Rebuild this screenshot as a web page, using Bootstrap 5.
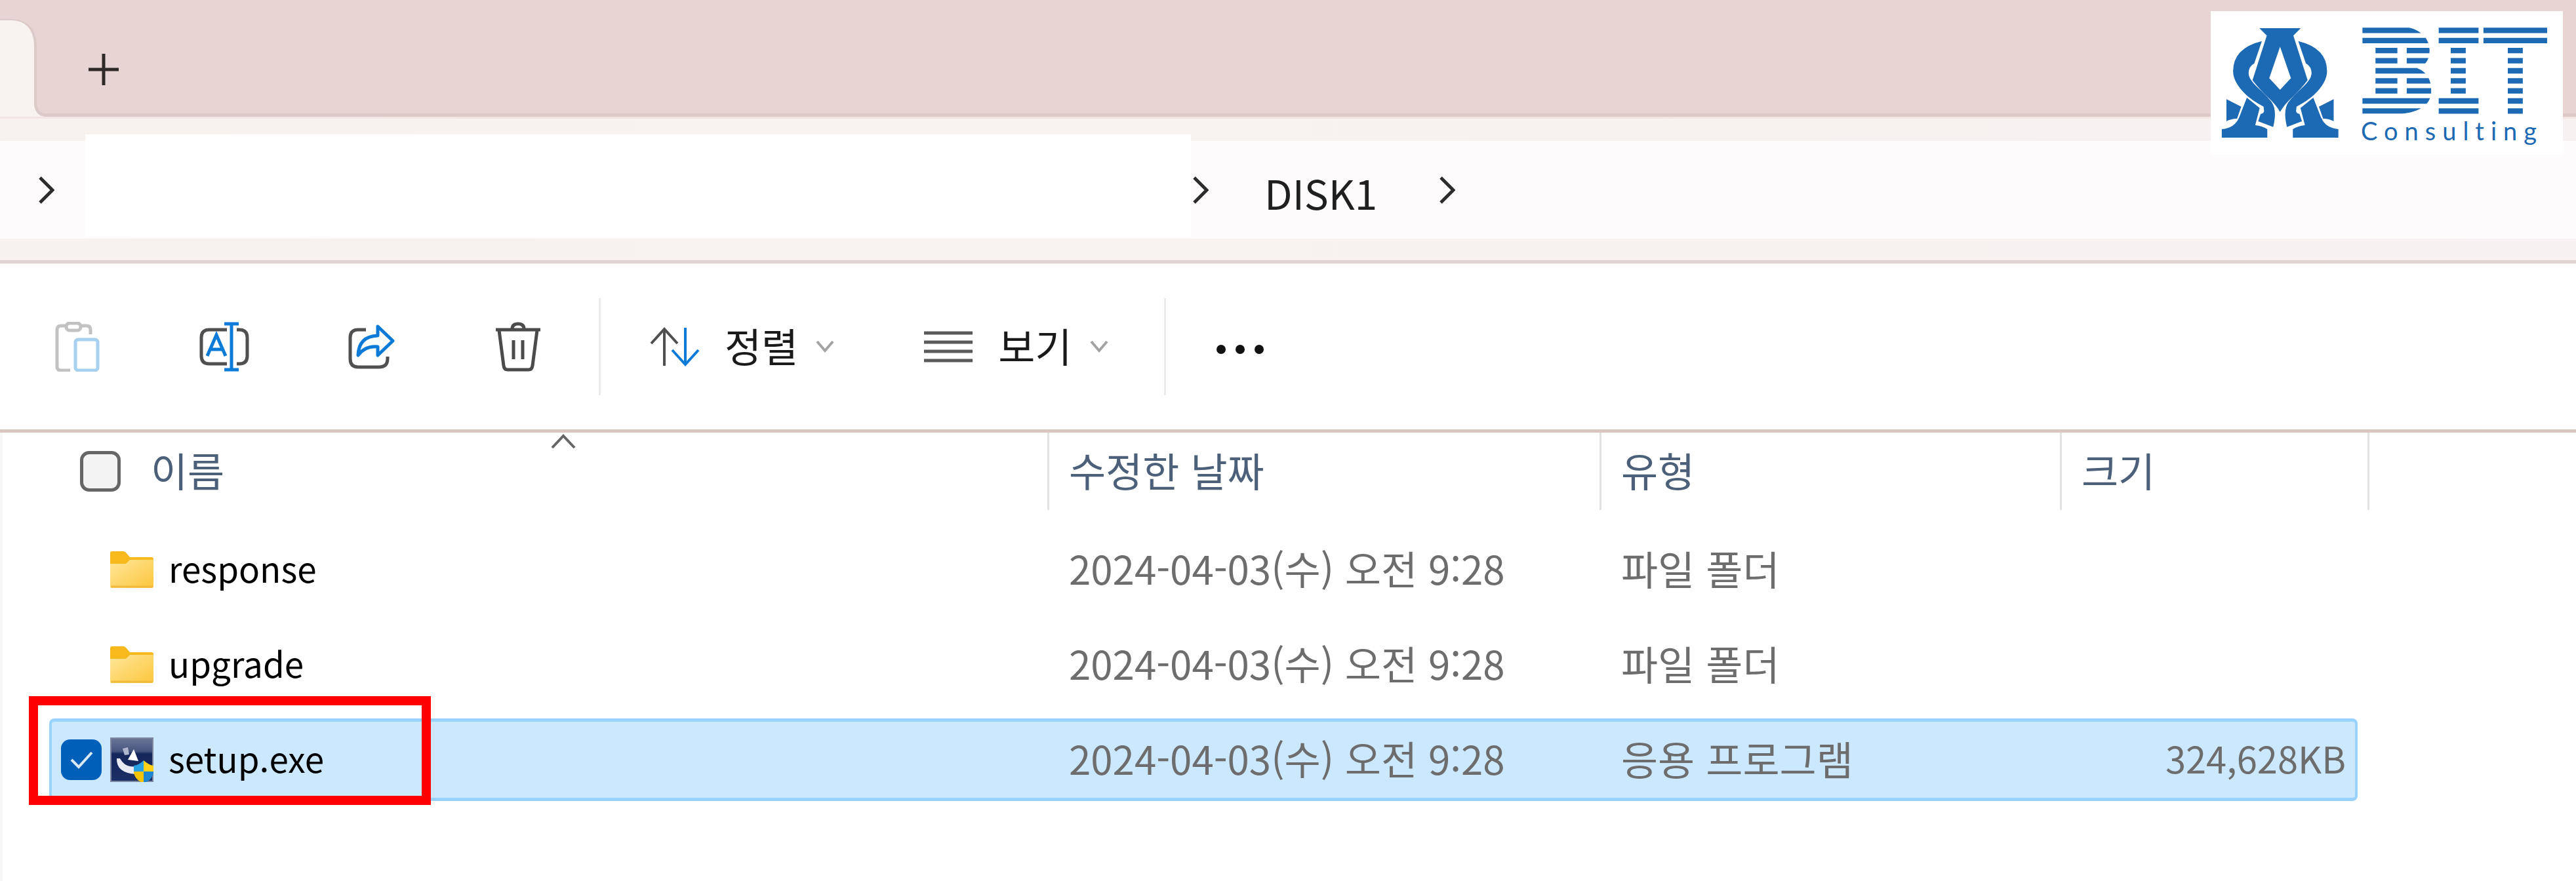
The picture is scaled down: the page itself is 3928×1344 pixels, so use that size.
<!DOCTYPE html>
<html lang="ko">
<head>
<meta charset="utf-8">
<meta name="viewport" content="width=device-width, initial-scale=1">
<title>DISK1</title>
<link href="https://cdn.jsdelivr.net/npm/bootstrap@5.3.0/dist/css/bootstrap.min.css" rel="stylesheet">
<style>
body{font-family:"Noto Sans CJK KR",sans-serif;background:#fff;color:#1a1a1a;font-size:61px;line-height:1;overflow-x:hidden}
svg{display:block;flex:none}
.tabstrip{height:181px;background:#e8d5d3;box-shadow:inset 0 -3px #f3e3e1,inset 0 -8px #dccac8}
.tabstrip .btn{margin:0 0 51px 63px}
.addressband{background:linear-gradient(90deg,#f8f2ef,#f7f1f1);padding:34px 0 33px;border-bottom:5px solid #e2d3d3}
.addressbar{height:149px;background:#fdfbfc;padding-left:59px}
.pathmask{flex:0 0 1686px;background:#fff;margin:-10px 3px 2px 47px}
.crumb{font-size:62px;color:#1f1f1f;margin:0 95px 0 85px;padding-top:6px}
.toolbar-row{height:258px;padding-left:80px;border-bottom:5px solid #d9c6c1}
.tools{gap:148px}
.rule{width:3px;height:148px;margin:0 75px 0 85px;background:#ebebeb}
.btn{--bs-btn-padding-x:0;--bs-btn-padding-y:0;--bs-btn-border-width:0px;--bs-btn-font-size:61px;--bs-btn-line-height:1;--bs-btn-color:#1a1a1a;--bs-btn-disabled-opacity:1}
.menu-btn{gap:27px}
.menu-btn + .menu-btn{margin-left:136px}
.menu-btn .label-txt{padding:0 0 4px 11px}
.listing{border-left:4px solid #f7f7f7;padding-left:71px;min-height:684px}
.files{table-layout:fixed;width:3538px;--bs-table-bg:transparent}
.files th,.files td{padding:0;font-weight:400;vertical-align:top}
.files th{height:136px;color:#4c607a}
.head-cell{height:118px;border-right:3px solid #e2e2e2;padding:0 0 6px 30px}
.name-head{padding-left:47px;gap:46px}
.name-head .form-check-input{margin-top:6px}
.files td{height:145px;padding:10px 0 9px;color:#6d6d6d}
.file-cell{height:126px;padding:0 0 6px 30px;border:0 solid #99d1ff}
.date-cell{font-size:60px}
.name-cell{font-size:53px;padding-left:18px;gap:13px;color:#000}
.name-cell .fname{margin-left:10px}
.name-cell svg,.name-cell .form-check-input{margin-top:6px}
.picked .file-cell{background:#cce8ff;border-width:5px 0}
.picked .name-cell{border-left-width:4px;border-radius:8px 0 0 8px;padding-left:14px}
.picked .size-cell{border-right-width:4px;border-radius:0 8px 8px 0}
.size-cell{font-size:56px;padding-right:14px}
.form-check-input{width:62px;height:62px;margin:0;flex:none;border:5px solid #666;border-radius:14px!important;background-color:#f3f3f3}
.name-cell .form-check-input{border:0}
.name-cell .form-check-input:checked{background-color:#005fb8;background-size:62px;background-image:url("data:image/svg+xml,%3Csvg xmlns='http://www.w3.org/2000/svg' viewBox='0 0 62 62'%3E%3Cpath d='M16 31 27 42 47 20' fill='none' stroke='%23dbe9f7' stroke-width='4'/%3E%3C/svg%3E")}
.ghost{visibility:hidden}
.sortmark{left:763px;top:1px}
.callout{left:-35px;top:-39px;width:613px;height:166px;border:14px solid red;pointer-events:none}
.brand{right:20px;top:17px;width:537px;height:219px;background:#fff}
.brand-word{left:229px;top:158px;font:400 38px/48px "Lato",sans-serif;letter-spacing:10px;color:#1c69b4}
</style>
<script src="https://cdn.jsdelivr.net/npm/bootstrap@5.3.0/dist/js/bootstrap.bundle.min.js"></script>
</head>
<body class="position-relative">
<svg width="0" height="0" class="position-absolute" aria-hidden="true">
  <defs>
    <linearGradient id="fold" x1="0" y1="0" x2="1" y2="1"><stop offset="0" stop-color="#ffe79b"/><stop offset="1" stop-color="#fcc63c"/></linearGradient>
    <linearGradient id="navy" x1="0" y1="0" x2="0" y2="1"><stop offset="0" stop-color="#6a7597"/><stop offset=".3" stop-color="#46557f"/><stop offset=".36" stop-color="#14265a"/><stop offset="1" stop-color="#1b2f66"/></linearGradient>
    <symbol id="folder" viewBox="0 0 66 56"><path d="M0 3Q0 0 3 0H20Q23 0 25 3L30 9H63Q66 9 66 12V30H0Z" fill="#f7b91c"/><path d="M0 19H24L30 13H66V53Q66 56 63 56H3Q0 56 0 53Z" fill="url(#fold)"/><path d="M1 54H65" stroke="#f0bb3c" stroke-width="3"/></symbol>
    <symbol id="next" viewBox="0 0 24 42"><path d="M2 2 21 21 2 40" fill="none" stroke="#2b2b2b" stroke-width="5"/></symbol>
    <symbol id="down" viewBox="0 0 28 20"><path d="M2 2 14 16 26 2" fill="none" stroke="#a3a3a3" stroke-width="4"/></symbol>
  </defs>
</svg>

<header class="tabstrip d-flex align-items-end">
  <svg width="71" height="153" viewBox="0 0 71 153"><path d="M0 1H19Q54 3 56 40V130Q57 144 71 146V150H0Z" fill="#dccac8"/><path d="M0 3H18Q49 4 52 38V132Q54 148 68 150H0Z" fill="#f8f3f0"/><path d="M0 151.500H71" stroke="#f3e3e1" stroke-width="3"/></svg>
  <button class="btn" type="button" aria-label="새 탭"><svg width="48" height="48" viewBox="0 0 48 48"><path d="M24 0V48M1 24H47" stroke="#2e2a2a" stroke-width="5"/></svg></button>
</header>

<nav class="addressband" aria-label="경로">
  <div class="addressbar d-flex align-items-center">
    <svg width="24" height="42"><use href="#next"/></svg>
    <div class="pathmask align-self-stretch"></div>
    <svg width="24" height="42"><use href="#next"/></svg>
    <a class="crumb text-decoration-none" href="#">DISK1</a>
    <svg width="24" height="42"><use href="#next"/></svg>
  </div>
</nav>

<div class="toolbar-row d-flex align-items-center" role="toolbar">
  <div class="tools d-flex">
    <button class="btn" type="button" disabled aria-label="붙여넣기"><svg width="76" height="76" viewBox="0 0 76 76" fill="none" stroke-width="5"><path d="M20 6H13Q7 6 7 12V68Q7 74 13 74H27M44 6H52Q58 6 58 12V19" stroke="#c2c2c2"/><rect x="21" y="2" width="22" height="11" rx="5" stroke="#c2c2c2"/><rect x="35" y="27" width="34" height="47" rx="4" stroke="#a8d1f0"/></svg></button>
    <button class="btn" type="button" aria-label="이름 바꾸기"><svg width="76" height="76" viewBox="0 0 76 76" fill="none" stroke-width="5"><path d="M42 12H15Q3 12 3 24V52Q3 64 15 64H42M57 12H61Q73 12 73 24V52Q73 64 61 64H57" stroke="#505050"/><path d="M38 3H60M38 73H60M49 2V74M12 52 26 20 40 52M17 42H35" stroke="#0c7bd8"/></svg></button>
    <button class="btn" type="button" aria-label="공유"><svg width="76" height="76" viewBox="0 0 76 76" fill="none" stroke-width="5" stroke-linejoin="round"><path d="M30 12H18Q6 12 6 24V56Q6 69 18 69H50Q63 69 63 56V53" stroke="#505050"/><path d="M48 7 71 29 48 51V38Q29 36 18 51Q19 22 48 21Z" stroke="#0c7bd8"/></svg></button>
    <button class="btn" type="button" aria-label="삭제"><svg width="76" height="76" viewBox="0 0 76 76" fill="none" stroke="#4b4b4b" stroke-width="5"><path d="M4 12H72M9 13 16 67Q17 73 22 73H54Q59 73 60 67L67 13M31 28V57M45 28V57M29 11Q29 3 38 3Q47 3 47 11"/></svg></button>
  </div>
  <div class="rule"></div>
  <button class="btn menu-btn d-flex align-items-center" type="button"><svg width="76" height="62" viewBox="0 0 76 62" fill="none" stroke-width="4"><path d="M22 60V4M2 26 22 4 42 26" stroke="#505050"/><path d="M54 2V58M34 36 54 58 74 36" stroke="#0c7bd8"/></svg><span class="label-txt">정렬</span><svg width="28" height="20"><use href="#down"/></svg></button>
  <button class="btn menu-btn d-flex align-items-center" type="button"><svg width="76" height="50" viewBox="0 0 76 50"><path d="M1 4H75M1 18H75M1 32H75M1 46H75" stroke="#5a5a5a" stroke-width="5"/></svg><span class="label-txt">보기</span><svg width="28" height="20"><use href="#down"/></svg></button>
  <div class="rule"></div>
  <button class="btn" type="button" aria-label="더 보기"><svg width="76" height="24" viewBox="0 0 76 24" fill="#111"><circle cx="9" cy="16" r="7"/><circle cx="38" cy="16" r="7"/><circle cx="67" cy="16" r="7"/></svg></button>
</div>

<main class="listing">
  <table class="files table table-borderless m-0">
    <colgroup><col style="width:1525px"><col style="width:842px"><col style="width:702px"><col style="width:451px"><col style="width:18px"></colgroup>
    <thead>
      <tr>
        <th scope="col"><div class="head-cell name-head d-flex align-items-center position-relative"><input class="form-check-input" type="checkbox" id="all"><label for="all">이름</label><svg class="sortmark position-absolute" width="42" height="24" viewBox="0 0 42 24"><path d="M4 22 21 4 38 22" fill="none" stroke="#666" stroke-width="4"/></svg></div></th>
        <th scope="col"><div class="head-cell d-flex align-items-center">수정한 날짜</div></th>
        <th scope="col"><div class="head-cell d-flex align-items-center">유형</div></th>
        <th scope="col" colspan="2"><div class="head-cell d-flex align-items-center">크기</div></th>
      </tr>
    </thead>
    <tbody>
      <tr>
        <td><div class="file-cell name-cell d-flex align-items-center"><input class="form-check-input ghost" type="checkbox" id="f1"><svg width="66" height="56"><use href="#folder"/></svg><label class="fname" for="f1">response</label></div></td>
        <td><div class="file-cell date-cell d-flex align-items-center">2024-04-03(수) 오전 9:28</div></td>
        <td><div class="file-cell d-flex align-items-center">파일 폴더</div></td>
        <td></td><td></td>
      </tr>
      <tr>
        <td><div class="file-cell name-cell d-flex align-items-center"><input class="form-check-input ghost" type="checkbox" id="f2"><svg width="66" height="56"><use href="#folder"/></svg><label class="fname" for="f2">upgrade</label></div></td>
        <td><div class="file-cell date-cell d-flex align-items-center">2024-04-03(수) 오전 9:28</div></td>
        <td><div class="file-cell d-flex align-items-center">파일 폴더</div></td>
        <td></td><td></td>
      </tr>
      <tr class="picked">
        <td><div class="file-cell name-cell d-flex align-items-center position-relative"><input class="form-check-input" type="checkbox" id="f3" checked><svg width="66" height="68" viewBox="0 0 66 68"><rect width="66" height="68" fill="#7d869f"/><rect x="2" y="2" width="62" height="64" fill="url(#navy)"/><path d="M19 17 27 15 29 26 22 27Z" fill="#aeb7cf"/><path d="M27 34 36 18 43 36Z" fill="#fff"/><path d="M10 32Q9 54 39 56L41 44Q23 47 15 32Z" fill="#e8ebf3"/><clipPath id="shield"><path d="M51 35Q59 42 66 43V54Q64 65 51 70Q38 65 36 54V43Q44 42 51 35Z"/></clipPath><g clip-path="url(#shield)"><path d="M34 34H51V52H34Z" fill="#2aa1e0"/><path d="M51 34H67V52H51Z" fill="#ffd21a"/><path d="M34 52H51V68H34Z" fill="#f5c400"/><path d="M51 52H67V68H51Z" fill="#1c86d0"/></g></svg><label class="fname" for="f3">setup.exe</label><div class="callout position-absolute"></div></div></td>
        <td><div class="file-cell date-cell d-flex align-items-center">2024-04-03(수) 오전 9:28</div></td>
        <td><div class="file-cell d-flex align-items-center">응용 프로그램</div></td>
        <td><div class="file-cell size-cell d-flex align-items-center justify-content-end">324,628KB</div></td>
        <td></td>
      </tr>
    </tbody>
  </table>
</main>

<div class="brand position-absolute">
  <svg width="537" height="219" viewBox="83 51 1432 657" preserveAspectRatio="none" fill="#1c69b4" role="img" aria-label="BIT">
    <path fill-rule="evenodd" d="M281 129H449L419 163 477 367Q450 408 412 448Q383 478 365 512Q347 478 318 448Q280 408 253 367L311 163ZM365 214 321 358 365 411 409 358Z"/>
    <g id="half"><path d="M291 188Q174 220 174 326Q174 377 228 435Q254 462 298 488L300 508Q299 520 286 521L276 555 337 581Q356 496 325 459C290 410 237 376 237 334Q238 303 260 290Z"/><path d="M230 447 282 494 264 573Q292 576 313 591V630H128V591Q181 586 199 536Z"/><path d="M147 454 207 488 190 543Q164 544 147 555Z"/></g>
    <use href="#half" transform="matrix(-1 0 0 1 730 0)"/>
    <clipPath id="bowls"><path d="M690 120H860C925 128 972 165 973 230C973 275 955 302 922 312C965 330 980 370 980 415C980 485 925 514 860 521H690Z"/></clipPath>
    <g stroke="#1c69b4" stroke-width="25" fill="none">
      <path clip-path="url(#bowls)" d="M700 139H990M700 185.500H990M753 231.500H842M880 231.500H990M753 278H842M880 278H990M753 324H990M753 370H842M880 370H990M753 416H842M880 416H990M700 462H990M700 508H990"/>
      <path d="M1010 139H1172M1010 185.500H1172M1059 231.500H1120M1059 278H1120M1059 324H1120M1059 370H1120M1059 416H1120M1010 462H1172M1010 508H1172"/>
      <path d="M1192 139H1451M1192 185.500H1451M1291 231.500H1352M1291 278H1352M1291 324H1352M1291 370H1352M1291 416H1352M1291 462H1352M1291 508H1352"/>
    </g>
  </svg>
  <div class="brand-word position-absolute">Consulting</div>
</div>
</body>
</html>
